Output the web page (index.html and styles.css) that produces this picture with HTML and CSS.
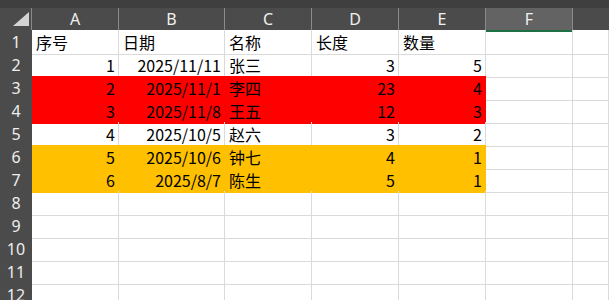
FILE: index.html
```html
<!DOCTYPE html>
<html lang="zh-CN">
<head>
<meta charset="utf-8">
<title>Sheet</title>
<link rel="stylesheet" href="styles.css">
</head>
<body>
<div class="topbar"></div>
<div class="row head">
  <div class="corner"><svg width="32" height="22" viewBox="0 0 32 22"><polygon points="13,18 29,18 29,4" fill="#d4d4d4"/></svg></div>
  <div class="ch">A</div><div class="ch">B</div><div class="ch">C</div><div class="ch">D</div><div class="ch">E</div><div class="ch sel">F</div><div class="ch last"></div>
</div>
<div class="row">
  <div class="rh">1</div>
  <div class="c">序号</div><div class="c">日期</div><div class="c">名称</div><div class="c">长度</div><div class="c">数量</div><div class="c"></div><div class="c"></div>
</div>
<div class="row">
  <div class="rh">2</div>
  <div class="c r">1</div><div class="c r">2025/11/11</div><div class="c">张三</div><div class="c r">3</div><div class="c r">5</div><div class="c"></div><div class="c"></div>
</div>
<div class="row">
  <div class="rh">3</div>
  <div class="c r red">2</div><div class="c r red">2025/11/1</div><div class="c red">李四</div><div class="c r red">23</div><div class="c r red">4</div><div class="c"></div><div class="c"></div>
</div>
<div class="row">
  <div class="rh">4</div>
  <div class="c r red">3</div><div class="c r red">2025/11/8</div><div class="c red">王五</div><div class="c r red">12</div><div class="c r red">3</div><div class="c"></div><div class="c"></div>
</div>
<div class="row">
  <div class="rh">5</div>
  <div class="c r">4</div><div class="c r">2025/10/5</div><div class="c">赵六</div><div class="c r">3</div><div class="c r">2</div><div class="c"></div><div class="c"></div>
</div>
<div class="row">
  <div class="rh">6</div>
  <div class="c r gold">5</div><div class="c r gold">2025/10/6</div><div class="c gold">钟七</div><div class="c r gold">4</div><div class="c r gold">1</div><div class="c"></div><div class="c"></div>
</div>
<div class="row">
  <div class="rh">7</div>
  <div class="c r gold">6</div><div class="c r gold">2025/8/7</div><div class="c gold">陈生</div><div class="c r gold">5</div><div class="c r gold">1</div><div class="c"></div><div class="c"></div>
</div>
<div class="row"><div class="rh">8</div><div class="c"></div><div class="c"></div><div class="c"></div><div class="c"></div><div class="c"></div><div class="c"></div><div class="c"></div></div>
<div class="row"><div class="rh">9</div><div class="c"></div><div class="c"></div><div class="c"></div><div class="c"></div><div class="c"></div><div class="c"></div><div class="c"></div></div>
<div class="row"><div class="rh">10</div><div class="c"></div><div class="c"></div><div class="c"></div><div class="c"></div><div class="c"></div><div class="c"></div><div class="c"></div></div>
<div class="row"><div class="rh">11</div><div class="c"></div><div class="c"></div><div class="c"></div><div class="c"></div><div class="c"></div><div class="c"></div><div class="c"></div></div>
<div class="row"><div class="rh">12</div><div class="c"></div><div class="c"></div><div class="c"></div><div class="c"></div><div class="c"></div><div class="c"></div><div class="c"></div></div>
</body>
</html>
```
FILE: styles.css
```css
html, body {
  margin: 0;
  padding: 0;
  background: #ffffff;
  overflow: hidden;
}
body {
  width: 609px;
  height: 300px;
  font-family: "Noto Sans CJK SC", "Noto Sans", sans-serif;
  font-size: 16px;
  color: #000;
}
.topbar {
  height: 8px;
  background: #3f3f3f;
}
.row {
  display: grid;
  grid-template-columns: 32px 87px 106px 87px 87px 87px 87px 1fr;
  height: 23px;
}
.row.head {
  height: 22px;
  background: #4b4b4b;
}
.corner {
  border-right: 1px solid #8a8a8a;
  box-sizing: border-box;
}
.corner svg { display: block; }
.ch {
  box-sizing: border-box;
  border-right: 1px solid #8a8a8a;
  color: #f0f0f0;
  text-align: center;
  line-height: 22px;
  font-family: "Noto Sans", sans-serif;
  font-size: 16px;
}
.ch.sel {
  background: #636363;
  border-bottom: 2px solid #1e7145;
}
.ch.last { border-right: none; }
.rh {
  box-sizing: border-box;
  background: #4b4b4b;
  border-bottom: 1px solid #6c6c6c;
  color: #eeeeee;
  text-align: center;
  line-height: 24px;
  font-family: "Noto Sans", sans-serif;
  font-size: 16px;
}
.c {
  box-sizing: border-box;
  border-right: 1px solid #dadada;
  border-bottom: 1px solid #dadada;
  padding: 0 3px 0 4px;
  line-height: 24px;
  white-space: nowrap;
  overflow: hidden;
}
.c.r { text-align: right; }
.c.red {
  background: #ff0000;
  border-color: #ff0000;
}
.c.gold {
  background: #ffc000;
  border-color: #ffc000;
}
```
